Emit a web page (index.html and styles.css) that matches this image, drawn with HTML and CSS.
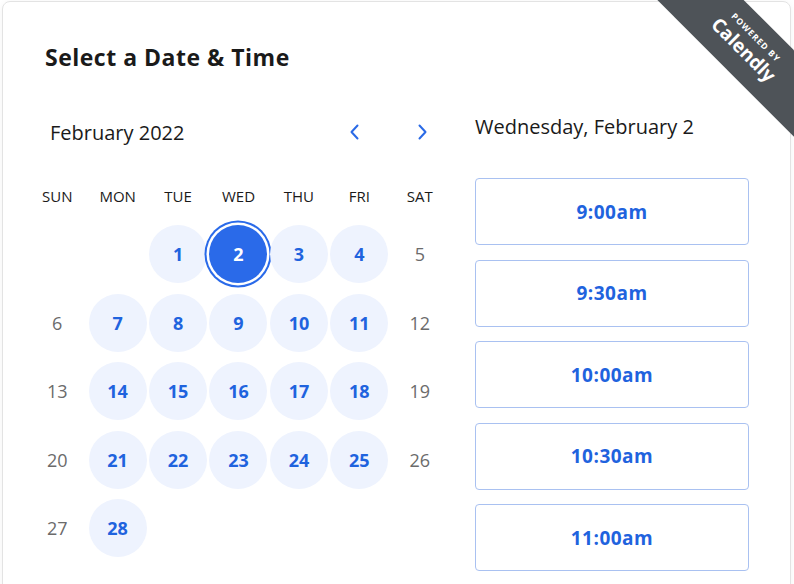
FILE: index.html
```html
<!DOCTYPE html>
<html lang="en">
<head>
<meta charset="utf-8">
<title>Select a Date &amp; Time</title>
<link rel="stylesheet" href="styles.css">
</head>
<body>
<div class="card">
  <h1 class="title">Select a Date &amp; Time</h1>
  <div class="body">
    <section class="cal">
      <div class="month-row">
        <span class="month">February 2022</span>
        <button class="nav prev" aria-label="Previous month">
          <svg width="16" height="16" viewBox="0 0 16 16"><polyline points="10.5,1.5 4.5,8 10.5,14.5" fill="none" stroke="currentColor" stroke-width="2" stroke-linecap="round" stroke-linejoin="round"/></svg>
        </button>
        <button class="nav next" aria-label="Next month">
          <svg width="16" height="16" viewBox="0 0 16 16"><polyline points="5.5,1.5 11.5,8 5.5,14.5" fill="none" stroke="currentColor" stroke-width="2" stroke-linecap="round" stroke-linejoin="round"/></svg>
        </button>
      </div>
      <div class="weekdays">
        <span>SUN</span><span>MON</span><span>TUE</span><span>WED</span><span>THU</span><span>FRI</span><span>SAT</span>
      </div>
      <div class="days">
        <span class="day empty"></span>
        <span class="day empty"></span>
        <span class="day avail">1</span>
        <span class="day avail selected">2</span>
        <span class="day avail">3</span>
        <span class="day avail">4</span>
        <span class="day off">5</span>
        <span class="day off">6</span>
        <span class="day avail">7</span>
        <span class="day avail">8</span>
        <span class="day avail">9</span>
        <span class="day avail">10</span>
        <span class="day avail">11</span>
        <span class="day off">12</span>
        <span class="day off">13</span>
        <span class="day avail">14</span>
        <span class="day avail">15</span>
        <span class="day avail">16</span>
        <span class="day avail">17</span>
        <span class="day avail">18</span>
        <span class="day off">19</span>
        <span class="day off">20</span>
        <span class="day avail">21</span>
        <span class="day avail">22</span>
        <span class="day avail">23</span>
        <span class="day avail">24</span>
        <span class="day avail">25</span>
        <span class="day off">26</span>
        <span class="day off">27</span>
        <span class="day avail">28</span>
      </div>
    </section>
    <section class="side">
      <div class="date-heading">Wednesday, February 2</div>
      <div class="slots">
        <button class="slot">9:00am</button>
        <button class="slot">9:30am</button>
        <button class="slot">10:00am</button>
        <button class="slot">10:30am</button>
        <button class="slot">11:00am</button>
      </div>
    </section>
  </div>
</div>
<div class="ribbon-wrap">
  <div class="ribbon">
    <span class="powered">POWERED BY</span>
    <span class="brand">Calendly</span>
  </div>
</div>
</body>
</html>
```

FILE: styles.css
```css
html, body {
  margin: 0;
  padding: 0;
  background: #ffffff;
  overflow: hidden;
}

body {
  width: 794px;
  height: 584px;
  position: relative;
  font-family: "Open Sans", "Lato", sans-serif;
  color: #1a1a1a;
}

.card {
  box-sizing: border-box;
  margin: 1px 0 0 2px;
  width: 789px;
  height: 640px;
  border: 1px solid #e3e3e3;
  border-radius: 8px;
  padding-top: 41px;
  box-shadow: 0 1px 6px rgba(0, 0, 0, 0.05);
}

.title {
  margin: 0 0 0 42px;
  font-size: 23px;
  line-height: 28px;
  font-weight: 700;
  letter-spacing: 0.5px;
  color: #1a1a1a;
}

.body {
  display: flex;
  margin-top: 39px;
}

.cal {
  width: 423px;
  margin-left: 24px;
}

.month-row {
  display: flex;
  align-items: center;
  height: 44px;
}

.month {
  flex: 1;
  padding-left: 23px;
  font-size: 20px;
  color: #1a1a1a;
}

.nav {
  width: 32px;
  height: 32px;
  padding: 0;
  border: 0;
  background: transparent;
  color: #2a6ae6;
  display: flex;
  align-items: center;
  justify-content: center;
}

.nav.prev {
  margin-right: 35px;
}

.nav.next {
  margin-right: 12px;
}

.weekdays {
  display: grid;
  grid-template-columns: repeat(7, 1fr);
  margin-top: 28px;
  height: 28px;
  align-items: center;
  text-align: center;
  font-size: 15px;
  color: #1a1a1a;
}

.days {
  display: grid;
  grid-template-columns: repeat(7, 1fr);
  grid-auto-rows: 68.5px;
  margin-top: 10px;
}

.day {
  display: flex;
  align-items: center;
  justify-content: center;
  font-size: 18px;
}

.day.off {
  color: #6b6b6b;
}

.day.avail {
  justify-self: center;
  align-self: center;
  width: 58px;
  height: 58px;
  border-radius: 50%;
  background: #eef3fe;
  color: #1f63de;
  font-weight: 700;
}

.day.selected {
  background: #2a6ae9;
  color: #ffffff;
  box-shadow: 0 0 0 2.5px #ffffff, 0 0 0 4.5px #2a6ae9;
}

.side {
  width: 274px;
  margin-left: 25px;
}

.date-heading {
  margin-top: 5px;
  font-size: 20px;
  line-height: 24px;
  color: #1a1a1a;
}

.slots {
  display: flex;
  flex-direction: column;
  gap: 14.5px;
  margin-top: 39px;
}

.slot {
  box-sizing: border-box;
  height: 67px;
  width: 274px;
  border: 1px solid #a9c1f1;
  border-radius: 4px;
  background: #ffffff;
  font-family: inherit;
  font-size: 19px;
  font-weight: 700;
  letter-spacing: 0.5px;
  color: #1f63de;
  padding: 0;
}

.ribbon-wrap {
  position: absolute;
  top: 0;
  right: 0;
  width: 140px;
  height: 140px;
  overflow: hidden;
}

.ribbon {
  position: absolute;
  left: -37.5px;
  top: 15.5px;
  width: 260px;
  height: 61px;
  box-sizing: border-box;
  padding-bottom: 4px;
  background: #4e5358;
  color: #ffffff;
  transform: rotate(45deg);
  display: flex;
  flex-direction: column;
  align-items: center;
  justify-content: center;
}

.powered {
  font-size: 8.5px;
  font-weight: 700;
  letter-spacing: 1px;
  line-height: 12px;
}

.brand {
  font-size: 19px;
  font-weight: 700;
  line-height: 22px;
}
```
